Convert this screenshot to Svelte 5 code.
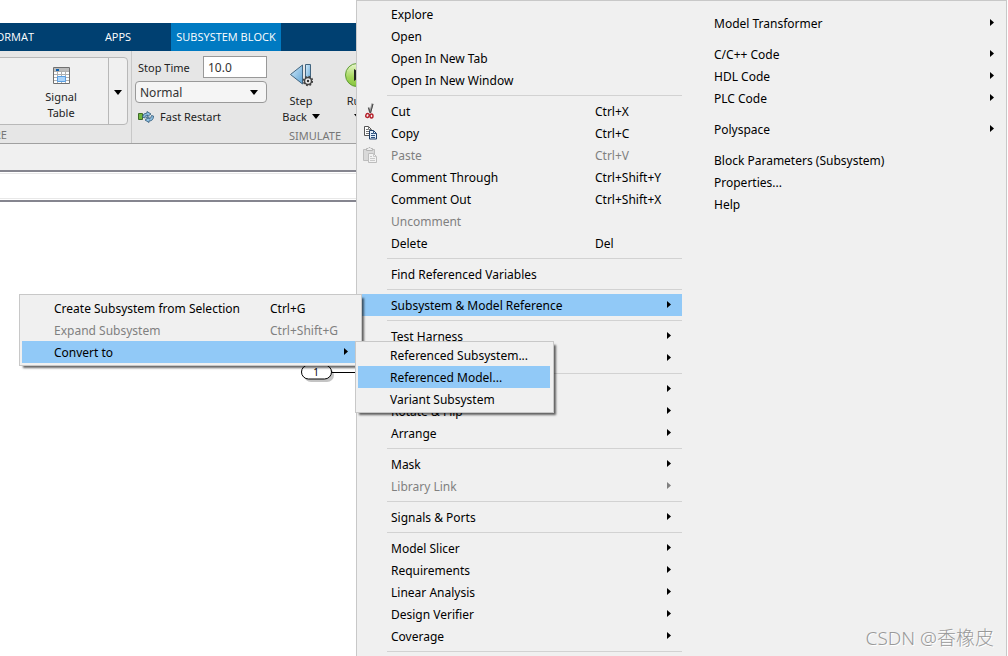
<script>
  let stopTime = '10.0';
  let mode = 'Normal';
  let activeTab = 'SUBSYSTEM BLOCK';

  const tabs = ['FORMAT', 'APPS', 'SUBSYSTEM BLOCK'];

  // each inner array is a group, groups are divided by a separator
  const mainGroups = [
    [
      { label: 'Explore' },
      { label: 'Open' },
      { label: 'Open In New Tab' },
      { label: 'Open In New Window' },
    ],
    [
      { label: 'Cut', keys: 'Ctrl+X', icon: 'cut' },
      { label: 'Copy', keys: 'Ctrl+C', icon: 'copy' },
      { label: 'Paste', keys: 'Ctrl+V', icon: 'paste', disabled: true },
      { label: 'Comment Through', keys: 'Ctrl+Shift+Y' },
      { label: 'Comment Out', keys: 'Ctrl+Shift+X' },
      { label: 'Uncomment', disabled: true },
      { label: 'Delete', keys: 'Del' },
    ],
    [{ label: 'Find Referenced Variables' }],
    [{ label: 'Subsystem & Model Reference', sub: true, open: true }],
    [
      { label: 'Test Harness', sub: true },
      { label: 'Observers', sub: true },
    ],
    [
      { label: 'Format', sub: true },
      { label: 'Rotate & Flip', sub: true },
      { label: 'Arrange', sub: true },
    ],
    [
      { label: 'Mask', sub: true },
      { label: 'Library Link', sub: true, disabled: true },
    ],
    [{ label: 'Signals & Ports', sub: true }],
    [
      { label: 'Model Slicer', sub: true },
      { label: 'Requirements', sub: true },
      { label: 'Linear Analysis', sub: true },
      { label: 'Design Verifier', sub: true },
      { label: 'Coverage', sub: true },
    ],
    [],
  ];

  const moreGroups = [
    [],
    [{ label: 'Model Transformer', sub: true }],
    [
      { label: 'C/C++ Code', sub: true },
      { label: 'HDL Code', sub: true },
      { label: 'PLC Code', sub: true },
    ],
    [{ label: 'Polyspace', sub: true }],
    [
      { label: 'Block Parameters (Subsystem)' },
      { label: 'Properties...' },
      { label: 'Help' },
    ],
  ];

  const referenceItems = [
    { label: 'Create Subsystem from Selection', keys: 'Ctrl+G' },
    { label: 'Expand Subsystem', keys: 'Ctrl+Shift+G', disabled: true },
    { label: 'Convert to', sub: true, open: true },
  ];

  const convertItems = [
    { label: 'Referenced Subsystem...' },
    { label: 'Referenced Model...', open: true },
    { label: 'Variant Subsystem' },
  ];
</script>

{#snippet downArrow()}
  <svg class="down" width="8" height="5" viewBox="0 0 8 5" aria-hidden="true">
    <path d="M0 0h8L4 5z" fill="#000" />
  </svg>
{/snippet}

{#snippet menuIcon(name)}
  <svg width="16" height="16" viewBox="0 0 16 16" fill="none" aria-hidden="true">
    {#if name === 'cut'}
      <path d="M9.500 0.500L7 10" stroke="#999" stroke-width="2" />
      <path d="M10 1L7.500 10" stroke="#444" />
      <path d="M5.500 4.500L7 9.500" stroke="#555" stroke-width="1.500" />
      <ellipse cx="4.500" cy="12.500" rx="1.700" ry="2" stroke="#b5202a" stroke-width="1.400" transform="rotate(20 4.500 12.500)" />
      <ellipse cx="8.500" cy="13" rx="1.500" ry="2" stroke="#b5202a" stroke-width="1.400" />
    {:else if name === 'copy'}
      <path d="M1.500 1.500h4l3 3v6h-7z" fill="#fff" stroke="#555" />
      <path d="M5.500 1.500v3h3M3 4.500h2M3 6.500h3M3 8.500h3" stroke="#777" />
      <path d="M6.500 5.500h4l3 3v5.500h-7z" fill="#e4effa" stroke="#1e3d66" />
      <path d="M10.500 5.500v3h3M8 8.500h2M8 10.500h4M8 12.500h4" stroke="#2d5280" />
    {:else}
      <path d="M.5 2.500h11v11H.5z" fill="#d9d9d9" stroke="#bdbdbd" />
      <path d="M3.500 3.500v-2H5l1-1h1l1 1h1.500v2z" fill="#eee" stroke="#b5b5b5" />
      <path d="M5.500 6.500h5l3 3v6h-8z" fill="#f3f3f3" stroke="#bdbdbd" />
      <path d="M10.500 6.500v3h3M7 9.500h2M7 11.500h5M7 13.500h5" stroke="#c8c8c8" />
    {/if}
  </svg>
{/snippet}

{#snippet menuItem(item)}
  <button class="item" class:open={item.open} role="menuitem" disabled={item.disabled}>
    <span class="icon">
      {#if item.icon}{@render menuIcon(item.icon)}{/if}
    </span>
    <span class="label">{item.label}</span>
    {#if item.keys}<span class="keys">{item.keys}</span>{/if}
    {#if item.sub}
      <svg class="arrow" width="4" height="7" viewBox="0 0 4 7" aria-hidden="true">
        <path d="M0 0L4 3.500L0 7z" fill="currentColor" />
      </svg>
    {/if}
  </button>
{/snippet}

{#snippet groupList(groups)}
  {#each groups as group, i}
    {#if i > 0}<div class="separator" role="separator"></div>{/if}
    {#each group as item}
      {@render menuItem(item)}
    {/each}
  {/each}
{/snippet}

<div class="app">
  <nav class="tabs">
    {#each tabs as tab}
      <button class="tab" class:active={tab === activeTab} on:click={() => (activeTab = tab)}>{tab}</button>
    {/each}
  </nav>

  <div class="ribbon">
    <section class="section prepare">
      <div class="gallery">
        <button class="tool signal">
          <svg width="17" height="17" viewBox="0 0 17 17" aria-hidden="true">
            <path d="M.5.5h16v16H.5z" fill="#fff" stroke="#707070" />
            <path d="M1 4.500h15M1 7.500h15M1 10.500h15M1 13.500h15M4.500 4v12M8.500 4v12M12.500 4v12" stroke="#b0b0b0" />
            <path d="M1 1h15v3H1z" fill="#bcbcbc" />
            <path d="M3 2h3v2H3z" fill="#0a5fb0" />
            <path d="M4.500 9.500h8v5h-8z" fill="#acd4fa" stroke="#5a9fe2" />
          </svg>
          <span>Signal</span>
          <span>Table</span>
        </button>
        <button class="expand" aria-label="More tools">{@render downArrow()}</button>
      </div>
      <div class="caption">PREPARE</div>
    </section>

    <section class="section simulate">
      <div class="controls">
        <div class="fields">
          <div class="stop">
            <label for="stop-time">Stop Time</label>
            <input id="stop-time" type="text" bind:value={stopTime} />
          </div>
          <div class="mode">
            <select aria-label="Simulation mode" bind:value={mode}>
              <option>Normal</option>
              <option>Accelerator</option>
            </select>
            {@render downArrow()}
          </div>
          <button class="restart">
            <svg width="16" height="12" viewBox="0 0 16 12" aria-hidden="true">
              <path d="M.5 2.500h4v6h-4z" fill="#72b63c" stroke="#3e6b2a" />
              <path d="M4.500 6Q5 2 9 2V.5L13 3L9.500 5.500V4Q7 4 6.500 7z" fill="#8fc0e2" stroke="#2d5877" stroke-width=".8" />
              <path d="M15.500 5Q15.500 10 11 10v1.500L7 9l4-2.500V8q2 0 2.500-3.500z" fill="#8fc0e2" stroke="#2d5877" stroke-width=".8" />
              <path d="M7.500 5.500h4v2h-4z" fill="#557f9c" />
            </svg>
            Fast Restart
          </button>
        </div>

        <button class="tool step">
          <svg width="24" height="24" viewBox="0 0 24 24" aria-hidden="true">
            <defs>
              <linearGradient id="blue" x1="0" y1="0" x2="1" y2="1">
                <stop offset="0" stop-color="#d5ecfb" />
                <stop offset="1" stop-color="#5fa3d4" />
              </linearGradient>
            </defs>
            <path d="M13.500 2v19L1.500 11.500z" fill="url(#blue)" stroke="#41647f" />
            <path d="M16.500 1.500h5v19h-5z" fill="url(#blue)" stroke="#41647f" />
            <circle cx="19" cy="18" r="3.500" fill="#eee" stroke="#444" stroke-width="1.500" />
            <circle cx="19" cy="18" r="4.500" fill="none" stroke="#444" stroke-width="1.500" stroke-dasharray="1.800 1.730" />
            <circle cx="19" cy="18" r="1.200" fill="#333" />
          </svg>
          <span>Step</span>
          <span>Back {@render downArrow()}</span>
        </button>

        <button class="tool run">
          <svg width="24" height="24" viewBox="0 0 24 24" aria-hidden="true">
            <defs>
              <linearGradient id="green" x1="0" y1="0" x2="0" y2="1">
                <stop offset="0" stop-color="#e9f7cf" />
                <stop offset="0.6" stop-color="#a4d65a" />
                <stop offset="1" stop-color="#86c43e" />
              </linearGradient>
            </defs>
            <circle cx="12" cy="12" r="11.500" fill="url(#green)" stroke="#5f9b35" />
            <path d="M9 6v12l9-6z" fill="#222" />
          </svg>
          <span>Run</span>
          <span>{@render downArrow()}</span>
        </button>
      </div>
      <div class="caption">SIMULATE</div>
    </section>
  </div>

  <div class="strip"></div>
  <div class="pathbar"></div>

  <main class="canvas">
    <svg class="port" width="58" height="22" viewBox="0 0 58 22">
      <rect x="4" y="4" width="30" height="14" rx="7" fill="#c4c4c4" />
      <rect x="1.500" y="1" width="30" height="14" rx="7" fill="#fff" stroke="#000" />
      <path d="M32 8.500h26" stroke="#000" />
      <text x="16" y="12" text-anchor="middle">1</text>
    </svg>
  </main>

  <div class="menu context" role="menu">
    <div class="column">{@render groupList(mainGroups)}</div>
    <div class="column plain">{@render groupList(moreGroups)}</div>
    <div class="watermark">CSDN @香橡皮</div>
  </div>

  <div class="menu popup reference" role="menu">
    {#each referenceItems as item}
      {@render menuItem(item)}
    {/each}
  </div>

  <div class="menu popup convert" role="menu">
    {#each convertItems as item}
      {@render menuItem(item)}
    {/each}
  </div>
</div>

<style>
  :global(body) {
    background: #fff;
  }

  .app {
    position: relative;
    display: flex;
    flex-direction: column;
    height: 100vh;
    box-sizing: border-box;
    padding: 23px 1px 0 0;
    overflow: hidden;
    font-family: "Noto Sans", "Open Sans", "Noto Sans CJK SC", sans-serif;
    font-size: 12px;
    line-height: 16px;
    color: #222;
  }

  button {
    padding: 0;
    border: none;
    background: none;
    font: inherit;
    color: inherit;
  }

  /* tab strip */
  .tabs {
    display: flex;
    flex: none;
    height: 28px;
    margin-left: -41px;
    background: #004071;
  }

  .tab {
    flex: none;
    width: 106px;
    font-family: "Open Sans", "Noto Sans", sans-serif;
    font-size: 11px;
    color: #fff;
  }

  .tab.active {
    width: 110px;
    background: #007ac2;
  }

  /* ribbon */
  .ribbon {
    display: flex;
    flex: none;
    height: 92px;
    background: #e6e6e6;
    border-bottom: 1px solid #a0a0a0;
  }

  .section {
    display: flex;
    flex: none;
    flex-direction: column;
    justify-content: space-between;
    box-sizing: border-box;
  }

  .caption {
    font-size: 11px;
    text-align: center;
    color: #777;
  }

  .prepare {
    width: 295px;
    margin-left: -163px;
    border-right: 1px solid #c8c8c8;
  }

  .gallery {
    display: flex;
    justify-content: flex-end;
    height: 66px;
    margin: 6px 3px 0 0;
    border: 1px solid #b8b8b8;
    border-radius: 4px;
    background: #f0f0f0;
  }

  .tool {
    display: flex;
    flex-direction: column;
    align-items: center;
    font-size: 11px;
  }

  .signal {
    width: 94px;
    padding-top: 9px;
  }

  .signal svg {
    margin-bottom: 5px;
  }

  .expand {
    width: 19px;
    border-left: 1px solid #b8b8b8;
  }

  .simulate {
    width: 366px;
  }

  .controls {
    display: flex;
    align-items: flex-start;
  }

  .fields {
    display: flex;
    flex-direction: column;
    gap: 3px;
    width: 132px;
    margin: 5px 6px 0 3px;
    font-size: 11px;
  }

  .stop {
    display: flex;
    align-items: center;
    justify-content: space-between;
    padding-left: 3px;
  }

  .stop label {
    padding-top: 1px;
  }

  input,
  select {
    box-sizing: border-box;
    height: 22px;
    margin: 0;
    padding: 1px 4px 0;
    border: 1px solid #999;
    background: #fff;
    font: inherit;
    font-size: 12px;
    color: #333;
  }

  input {
    width: 64px;
  }

  .mode {
    position: relative;
  }

  select {
    display: block;
    width: 100%;
    border-radius: 4px;
    background: #f5f5f5;
    appearance: none;
  }

  .mode :global(.down) {
    position: absolute;
    right: 9px;
    top: 9px;
    pointer-events: none;
  }

  .restart {
    display: flex;
    align-items: center;
    gap: 6px;
    height: 22px;
    padding-left: 3px;
  }

  .step,
  .run {
    width: 56px;
    padding-top: 12px;
  }

  .step svg,
  .run svg {
    margin-bottom: 6px;
  }

  .step .down,
  .run .down {
    margin: 0 0 2px 2px;
  }

  /* model area */
  .strip {
    flex: none;
    height: 26px;
    background: #f0f0f0;
    border-bottom: 2px solid #85858f;
  }

  .pathbar {
    flex: none;
    height: 24px;
    margin-top: 1px;
    border-top: 1px solid #e8e8e8;
    border-bottom: 1px solid #e8e8e8;
  }

  .canvas {
    position: relative;
    flex: 1;
    margin-top: 1px;
    border-top: 2px solid #85858f;
  }

  .port {
    position: absolute;
    left: 300px;
    top: 162px;
  }

  .port text {
    font-size: 10px;
  }

  /* menus */
  .menu {
    position: absolute;
    box-sizing: border-box;
    border: 1px solid #c8c8c8;
    background: #f0f0f0;
    color: #000;
  }

  .context {
    display: grid;
    grid-template-columns: 1fr 1fr;
    left: 356px;
    right: 1px;
    top: 0;
    padding: 2px 1px 2px 2px;
  }

  .popup {
    padding: 2px 3px 2px 2px;
    box-shadow: 3px 3px 2px -1px rgba(0, 0, 0, 0.6);
  }

  .reference {
    left: 19px;
    top: 294px;
    width: 343px;
  }

  .convert {
    left: 355px;
    top: 341px;
    width: 199px;
  }

  .item {
    display: flex;
    align-items: center;
    width: 100%;
    height: 22px;
    text-align: left;
    white-space: nowrap;
  }

  .item:disabled {
    color: #808080;
  }

  .item.open {
    background: #91c9f7;
  }

  .icon {
    display: flex;
    width: 28px;
    padding-left: 4px;
  }

  .label,
  .keys {
    padding-top: 2px;
  }

  .label {
    flex: 1;
  }

  .keys {
    width: 87px;
  }

  .reference .keys {
    width: 88px;
  }

  .arrow {
    margin: 0 11px 1px 0;
  }

  .reference .arrow {
    margin-right: 10px;
  }

  .separator {
    height: 1px;
    margin: 4px 0 4px 28px;
    background: #d2d2d2;
  }

  .plain .separator {
    background: none;
  }

  .watermark {
    position: absolute;
    right: 12px;
    bottom: 7px;
    font-family: "Noto Sans", "Noto Sans CJK SC", sans-serif;
    font-size: 19px;
    line-height: 26px;
    font-weight: 300;
    color: #999;
    text-shadow: 1px 1px 0 #fff;
  }
</style>
